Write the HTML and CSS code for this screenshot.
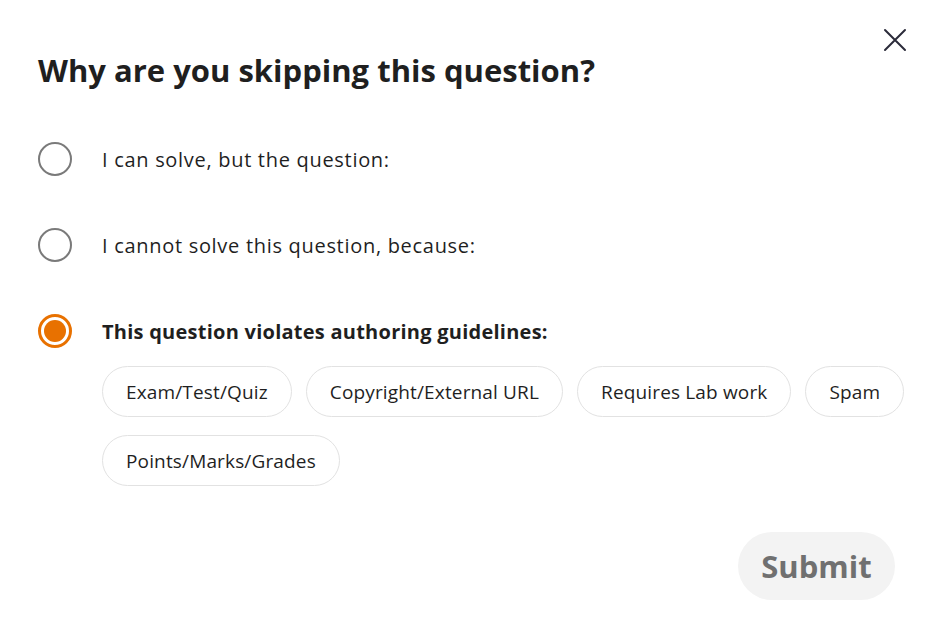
FILE: index.html
```html
<!DOCTYPE html>
<html lang="en">
<head>
    <meta charset="UTF-8">
    <meta name="viewport" content="width=device-width, initial-scale=1.0">
    <title>Skip question</title>
    <link rel="stylesheet" href="styles.css">
</head>
<body>
    <div class="dialog">
        <button type="button" class="close" aria-label="Close">
            <svg width="24" height="24" viewBox="0 0 24 24" fill="none" stroke="#2b2b3a" stroke-width="2" stroke-linecap="round">
                <path d="M2 2 L22 22 M22 2 L2 22"/>
            </svg>
        </button>
        <h2>Why are you skipping this question?</h2>
        <form class="options">
            <label class="option">
                <input type="radio" name="reason">
                <span class="radio"></span>
                <span class="option-text">I can solve, but the question:</span>
            </label>
            <label class="option">
                <input type="radio" name="reason">
                <span class="radio"></span>
                <span class="option-text">I cannot solve this question, because:</span>
            </label>
            <label class="option">
                <input type="radio" name="reason" checked>
                <span class="radio"></span>
                <span class="option-text">This question violates authoring guidelines:</span>
            </label>
            <div class="chips">
                <button type="button" class="chip">Exam/Test/Quiz</button>
                <button type="button" class="chip">Copyright/External URL</button>
                <button type="button" class="chip">Requires Lab work</button>
                <button type="button" class="chip">Spam</button>
                <button type="button" class="chip">Points/Marks/Grades</button>
            </div>
        </form>
        <div class="actions">
            <button type="button" class="submit" disabled>Submit</button>
        </div>
    </div>
</body>
</html>
```

FILE: styles.css
```css
body {
    font-family: "Open Sans", Arial, sans-serif;
    margin: 0;
    padding: 0;
    background-color: #fff;
    color: #1f1f1f;
}
.dialog {
    position: relative;
    width: 940px;
    height: 635px;
    padding: 49px 30px 0 38px;
    box-sizing: border-box;
}
.close {
    position: absolute;
    top: 28px;
    right: 33px;
    padding: 0;
    border: none;
    background: none;
    cursor: pointer;
}
h2 {
    margin: 0 0 51px 0;
    font-size: 31px;
    font-weight: 700;
    line-height: 42px;
}
.option {
    display: flex;
    align-items: center;
    height: 34px;
    margin-bottom: 52px;
    cursor: pointer;
}
.option:nth-of-type(3) {
    margin-bottom: 18px;
}
.option input {
    display: none;
}
.radio {
    width: 34px;
    height: 34px;
    border: 2.5px solid #7a7a7a;
    border-radius: 50%;
    box-sizing: border-box;
    margin-right: 30px;
    flex-shrink: 0;
}
.option input:checked + .radio {
    border: 3px solid #e87100;
    padding: 3px;
    background-color: #e87100;
    background-clip: content-box;
}
.option-text {
    font-size: 20px;
    letter-spacing: 0.7px;
}
.option input:checked ~ .option-text {
    font-weight: 700;
    letter-spacing: 0.25px;
}
.chips {
    display: flex;
    flex-wrap: wrap;
    gap: 18px 14px;
    margin-left: 64px;
}
.chip {
    height: 51px;
    padding: 0 23px;
    border: 1px solid #e2e2e2;
    border-radius: 26px;
    background-color: #fff;
    font-family: inherit;
    font-size: 19px;
    letter-spacing: 0.15px;
    color: #1f1f1f;
    cursor: pointer;
}
.actions {
    display: flex;
    justify-content: flex-end;
    margin-top: 46px;
    margin-right: 15px;
}
.submit {
    width: 157px;
    height: 68px;
    border: none;
    border-radius: 34px;
    background-color: #f3f3f3;
    color: #707070;
    font-family: inherit;
    font-size: 31px;
    font-weight: 700;
}
```
